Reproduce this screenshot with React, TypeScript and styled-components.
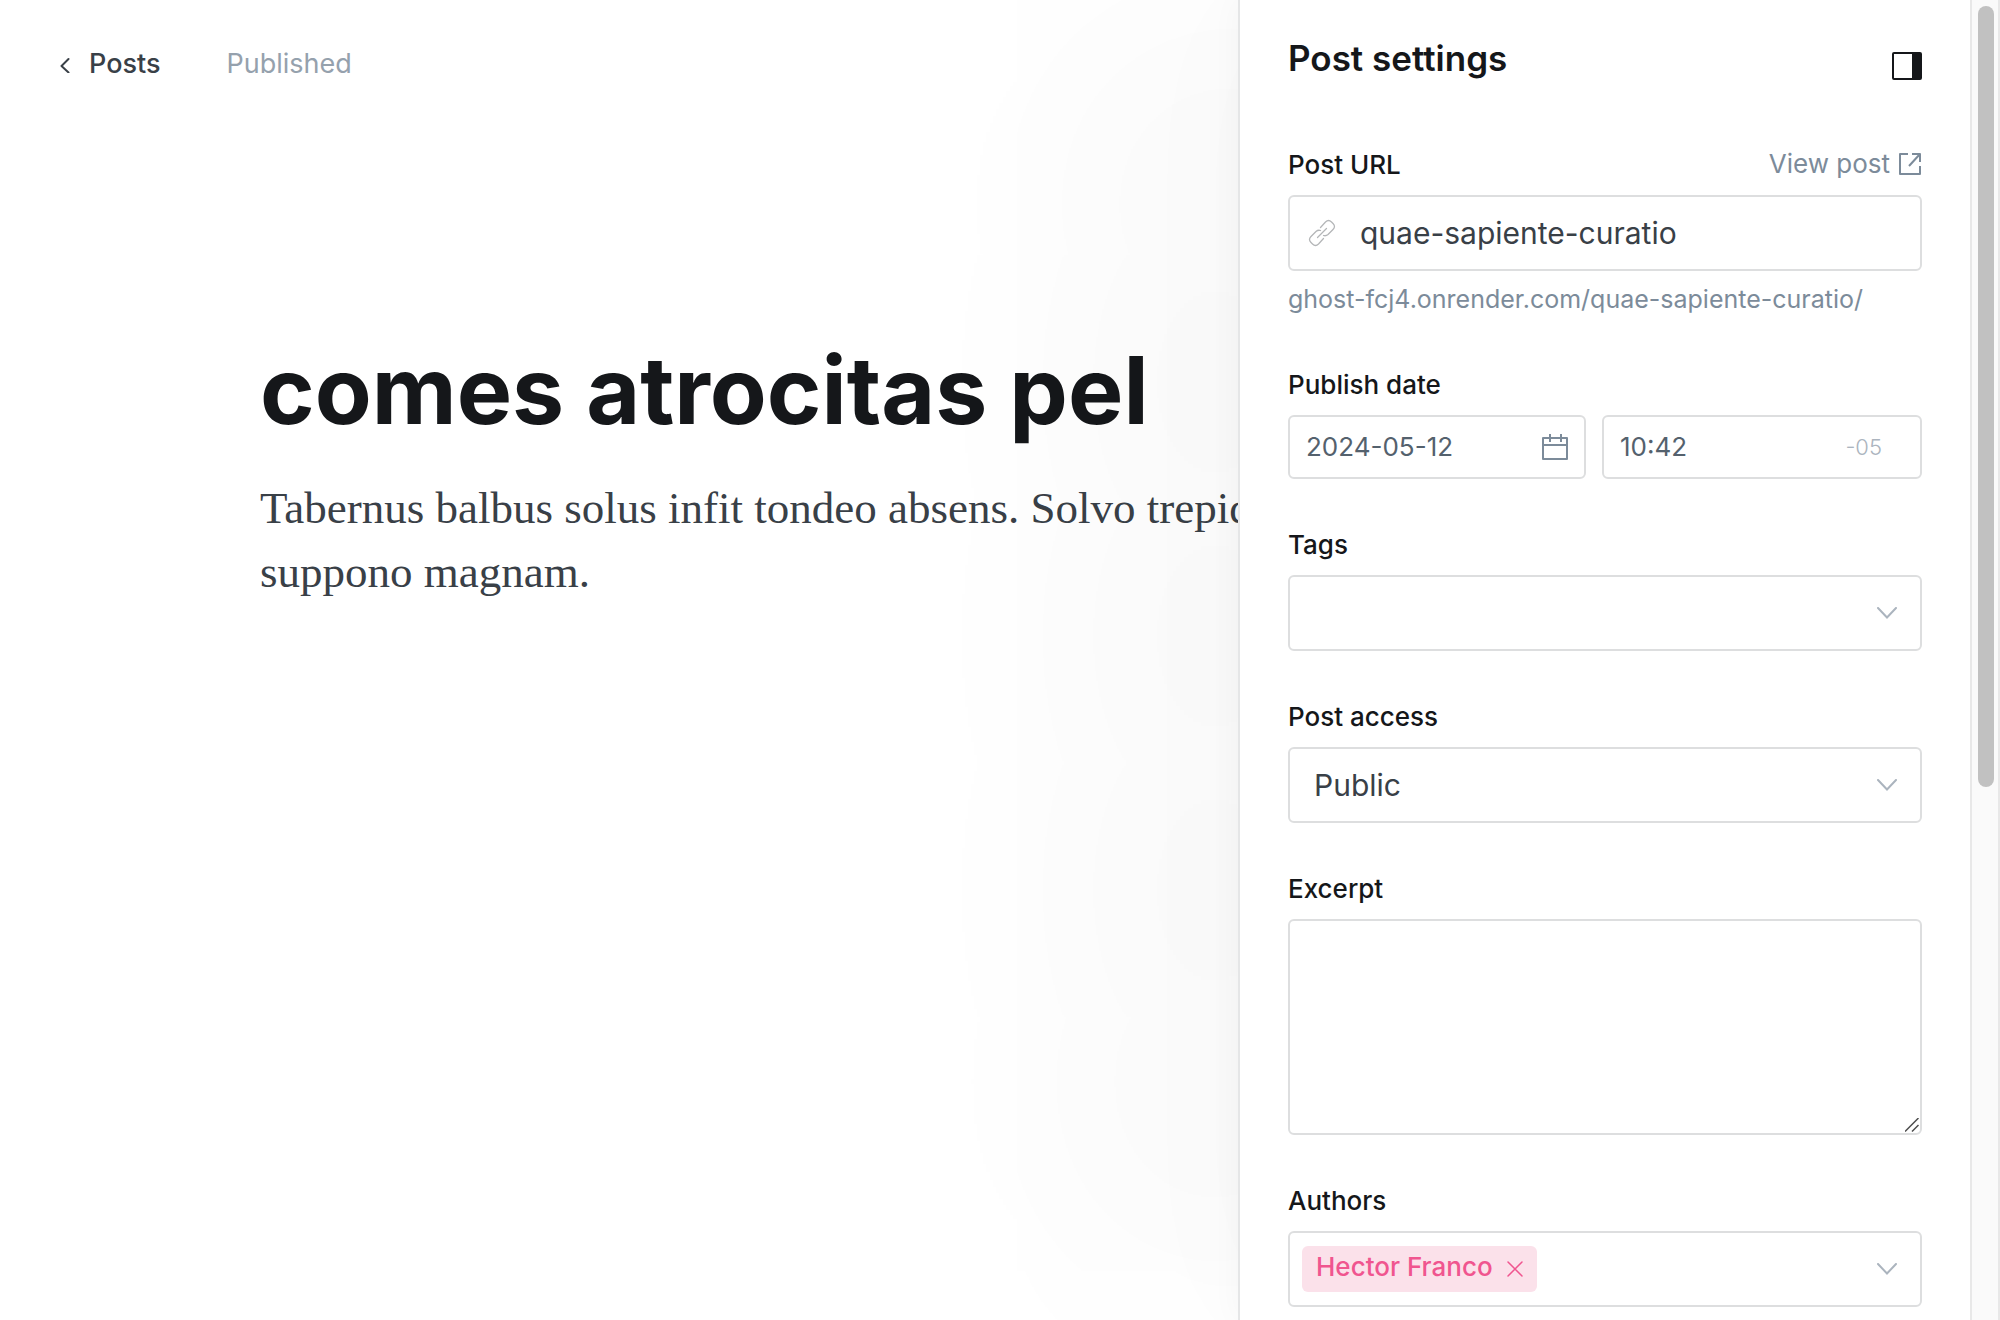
import React, { useState } from "react";
import styled, { createGlobalStyle, css } from "styled-components";

const sans = `Inter, "Liberation Sans", sans-serif`;
const serif = `Georgia, "Liberation Serif", serif`;

const GlobalStyle = createGlobalStyle`
  *, *::before, *::after { box-sizing: border-box; }
  body { margin: 0; background: #fff; font-family: ${sans}; color: #15171a; -webkit-font-smoothing: antialiased; }
  button, input, select, textarea { font: inherit; color: inherit; margin: 0; }
`;

const Screen = styled.div`
  position: relative;
  height: 100vh;
  overflow: hidden;
`;

const Editor = styled.main`
  display: flex;
  flex-direction: column;
`;

const TopBar = styled.header`
  display: flex;
  align-items: center;
  height: 128px;
  padding: 0 60px;
  gap: 66px;
  font-size: 27px;
  line-height: 32px;
`;

const BackLink = styled.a`
  display: flex;
  align-items: center;
  gap: 18px;
  color: #394047;
  font-weight: 500;
  text-decoration: none;
`;

const Status = styled.span`
  color: #95a1ad;
`;

const Article = styled.article`
  width: 100%;
  max-width: 1480px;
  margin: 0 auto;
  padding-top: 206px;
`;

const Title = styled.h1`
  margin: 0 0 30px;
  font-size: 93px;
  line-height: 112px;
  font-weight: 700;
`;

const Paragraph = styled.p`
  margin: 0;
  font-family: ${serif};
  font-size: 45px;
  line-height: 64px;
  color: #394047;
`;

const Panel = styled.aside`
  position: absolute;
  top: 0;
  right: 0;
  bottom: 0;
  width: 762px;
  display: flex;
  background: #fff;
  border-left: 2px solid #e5e6e7;
  box-shadow:
    0 0 30px rgba(0, 0, 0, 0.035),
    0 0 160px rgba(0, 0, 0, 0.02),
    -210px -10px 260px -35px rgba(0, 0, 0, 0.027);
`;

const Settings = styled.form`
  flex: 1;
  min-width: 0;
  overflow-y: auto;
  scrollbar-width: none;
  padding: 32px 48px;
`;

const PanelHeader = styled.div`
  display: flex;
  justify-content: space-between;
  align-items: flex-end;
  height: 48px;
  margin-bottom: 69px;
`;

const PanelTitle = styled.h2`
  margin: 0;
  font-size: 35px;
  line-height: 44px;
  font-weight: 600;
`;

const IconButton = styled.button`
  display: flex;
  padding: 0;
  border: 0;
  background: none;
  color: inherit;
  cursor: pointer;
`;

const Fields = styled.div`
  display: flex;
  flex-direction: column;
  gap: 50px;
`;

const Field = styled.div`
  display: flex;
  flex-direction: column;
`;

const LabelRow = styled.div`
  display: flex;
  justify-content: space-between;
  align-items: flex-start;
  margin-bottom: 14px;
`;

const Label = styled.label`
  font-size: 26px;
  line-height: 32px;
  font-weight: 500;
`;

const ViewLink = styled.a`
  display: flex;
  align-items: center;
  gap: 8px;
  font-size: 26px;
  line-height: 30px;
  color: #7c8b9a;
  text-decoration: none;
`;

const Hint = styled.p`
  margin: 8px 0 0;
  font-size: 25px;
  line-height: 40px;
  color: #7c8b9a;
`;

const frame = css`
  border: 2px solid #dddedf;
  border-radius: 6px;
  background: #fff;
`;

const Frame = styled.div<{ $compact?: boolean }>`
  ${frame}
  display: flex;
  align-items: center;
  flex: 1;
  min-width: 0;
  min-height: ${(p) => (p.$compact ? 64 : 76)}px;
  padding: ${(p) => (p.$compact ? "0 16px" : "0 18px")};
`;

const TextInput = styled.input<{ $compact?: boolean }>`
  flex: 1;
  min-width: 0;
  padding: 0;
  border: 0;
  outline: 0;
  background: none;
  font-size: ${(p) => (p.$compact ? 26 : 30)}px;
  line-height: ${(p) => (p.$compact ? 32 : 40)}px;
  color: ${(p) => (p.$compact ? "#54616d" : "#394047")};
`;

const UrlFrame = styled(Frame)`
  gap: 24px;
`;

const DateRow = styled.div`
  display: grid;
  grid-template-columns: 298fr 320fr;
  gap: 16px;
`;

const TimeFrame = styled(Frame)`
  padding-right: 38px;
`;

const Zone = styled.span`
  font-size: 22px;
  line-height: 32px;
  font-weight: 300;
  color: #abb4be;
`;

const SelectWrap = styled.div`
  display: grid;
  align-items: center;

  > * { grid-area: 1 / 1; }
  > svg { justify-self: end; margin-right: 25px; pointer-events: none; }
`;

const Select = styled.select`
  ${frame}
  appearance: none;
  width: 100%;
  height: 76px;
  padding: 0 56px 0 24px;
  font-size: 30px;
  line-height: 40px;
  color: #394047;
`;

const AreaWrap = styled.div`
  display: grid;

  > * { grid-area: 1 / 1; }
  > svg { place-self: end; margin: 3px; pointer-events: none; }
`;

const TextArea = styled.textarea`
  ${frame}
  display: block;
  width: 100%;
  height: 216px;
  padding: 16px 24px;
  font-size: 30px;
  line-height: 40px;
  resize: none;
`;

const TokenFrame = styled(Frame)`
  justify-content: space-between;
  padding: 0 23px 0 12px;
`;

const Token = styled.span`
  display: flex;
  align-items: center;
  gap: 14px;
  height: 46px;
  padding: 0 14px;
  border-radius: 6px;
  background: #fbe1ea;
  color: #f0558f;
`;

const TokenName = styled.span`
  padding-bottom: 4px;
  font-size: 26px;
  line-height: 32px;
  font-weight: 500;
`;

const ScrollTrack = styled.div`
  width: 30px;
  padding: 6px 4px 6px 6px;
  border: solid #e8e8e8;
  border-width: 0 2px;
  background: #fafafa;
`;

const ScrollThumb = styled.div`
  height: 59.7%;
  border-radius: 8px;
  background: #c1c1c1;
`;

const BackIcon = () => (
  <svg width="11" height="18" viewBox="0 0 11 18" fill="none" stroke="currentColor" strokeWidth="2" strokeLinecap="round" strokeLinejoin="round" aria-hidden="true">
    <path d="M8.500 4 1.500 11l7 6.500" />
  </svg>
);

const SidebarIcon = () => (
  <svg width="30" height="28" viewBox="0 0 30 28" fill="none" aria-hidden="true">
    <rect x="1" y="1" width="28" height="26" rx="1" stroke="#15171a" strokeWidth="2" />
    <path d="M20 1h9v26h-9z" fill="#15171a" />
  </svg>
);

const ExternalIcon = () => (
  <svg width="24" height="24" viewBox="0 0 24 24" fill="none" stroke="currentColor" strokeWidth="2" strokeLinejoin="round" aria-hidden="true">
    <path d="M10 2H2v20h20v-8M14 2h8v8M22 2 11 14" />
  </svg>
);

const LinkIcon = () => (
  <svg width="28" height="28" viewBox="0 0 28 28" fill="none" stroke="#b4b6b8" strokeWidth="1.250" strokeLinecap="round" strokeLinejoin="round" aria-hidden="true">
    <path d="m9.500 18.500 9-9" />
    <path d="M12.500 8.500 17.500 3q3-3 6 0l1.500 1.500q3 3 0 6l-5 5q-2 1.800-4.500 1" />
    <path d="M15.500 19.500 10.500 25q-3 3-6 0l-1.500-1.500q-3-3 0-6l5-5q2-1.800 4.500-1" />
  </svg>
);

const CalendarIcon = () => (
  <svg width="26" height="26" viewBox="0 0 26 26" fill="none" stroke="#7c8b9a" strokeWidth="2" strokeLinejoin="round" aria-hidden="true">
    <path d="M1 4h24v21H1zM1 11h24M8 0v8M19 0v8" />
  </svg>
);

const ChevronIcon = () => (
  <svg width="20" height="12" viewBox="0 0 20 12" fill="none" stroke="#abb4be" strokeWidth="2" strokeLinecap="round" aria-hidden="true">
    <path d="m1 1 9 9.500L19 1" />
  </svg>
);

const CloseIcon = () => (
  <svg width="16" height="16" viewBox="0 0 16 16" fill="none" stroke="currentColor" strokeWidth="1.500" strokeLinecap="round" aria-hidden="true">
    <path d="m1 1 14 14M15 1 1 15" />
  </svg>
);

const GripIcon = () => (
  <svg width="14" height="14" viewBox="0 0 14 14" stroke="#4d4d4d" strokeWidth="1.500" aria-hidden="true">
    <path d="M0 13.500 13.500 0M7 13.500 13.500 7" />
  </svg>
);

export default function App() {
  const [slug, setSlug] = useState("quae-sapiente-curatio");
  const [date, setDate] = useState("2024-05-12");
  const [time, setTime] = useState("10:42");
  const [authors, setAuthors] = useState(["Hector Franco"]);

  return (
    <Screen>
      <GlobalStyle />
      <Editor>
        <TopBar>
          <BackLink href="#posts">
            <BackIcon />
            Posts
          </BackLink>
          <Status>Published</Status>
        </TopBar>
        <Article>
          <Title>comes atrocitas pel</Title>
          <Paragraph>
            Tabernus balbus solus infit tondeo absens. Solvo trepid
            <br />
            suppono magnam.
          </Paragraph>
        </Article>
      </Editor>

      <Panel>
        <Settings onSubmit={(e) => e.preventDefault()}>
          <PanelHeader>
            <PanelTitle>Post settings</PanelTitle>
            <IconButton type="button" aria-label="Toggle settings">
              <SidebarIcon />
            </IconButton>
          </PanelHeader>

          <Fields>
            <Field>
              <LabelRow>
                <Label htmlFor="url">Post URL</Label>
                <ViewLink href="#view">
                  View post
                  <ExternalIcon />
                </ViewLink>
              </LabelRow>
              <UrlFrame>
                <LinkIcon />
                <TextInput id="url" value={slug} onChange={(e) => setSlug(e.target.value)} />
              </UrlFrame>
              <Hint>ghost-fcj4.onrender.com/{slug}/</Hint>
            </Field>

            <Field>
              <LabelRow>
                <Label htmlFor="date">Publish date</Label>
              </LabelRow>
              <DateRow>
                <Frame $compact>
                  <TextInput $compact id="date" value={date} onChange={(e) => setDate(e.target.value)} />
                  <CalendarIcon />
                </Frame>
                <TimeFrame $compact>
                  <TextInput $compact aria-label="Publish time" value={time} onChange={(e) => setTime(e.target.value)} />
                  <Zone>-05</Zone>
                </TimeFrame>
              </DateRow>
            </Field>

            <Field>
              <LabelRow>
                <Label htmlFor="tags">Tags</Label>
              </LabelRow>
              <SelectWrap>
                <Select id="tags" defaultValue="">
                  <option value="" />
                </Select>
                <ChevronIcon />
              </SelectWrap>
            </Field>

            <Field>
              <LabelRow>
                <Label htmlFor="access">Post access</Label>
              </LabelRow>
              <SelectWrap>
                <Select id="access" defaultValue="public">
                  <option value="public">Public</option>
                </Select>
                <ChevronIcon />
              </SelectWrap>
            </Field>

            <Field>
              <LabelRow>
                <Label htmlFor="excerpt">Excerpt</Label>
              </LabelRow>
              <AreaWrap>
                <TextArea id="excerpt" />
                <GripIcon />
              </AreaWrap>
            </Field>

            <Field>
              <LabelRow>
                <Label as="span" id="authors">Authors</Label>
              </LabelRow>
              <TokenFrame role="group" aria-labelledby="authors">
                {authors.map((name) => (
                  <Token key={name}>
                    <TokenName>{name}</TokenName>
                    <IconButton
                      type="button"
                      aria-label={`Remove ${name}`}
                      onClick={() => setAuthors(authors.filter((a) => a !== name))}
                    >
                      <CloseIcon />
                    </IconButton>
                  </Token>
                ))}
                <ChevronIcon />
              </TokenFrame>
            </Field>
          </Fields>
        </Settings>
        <ScrollTrack>
          <ScrollThumb />
        </ScrollTrack>
      </Panel>
    </Screen>
  );
}
